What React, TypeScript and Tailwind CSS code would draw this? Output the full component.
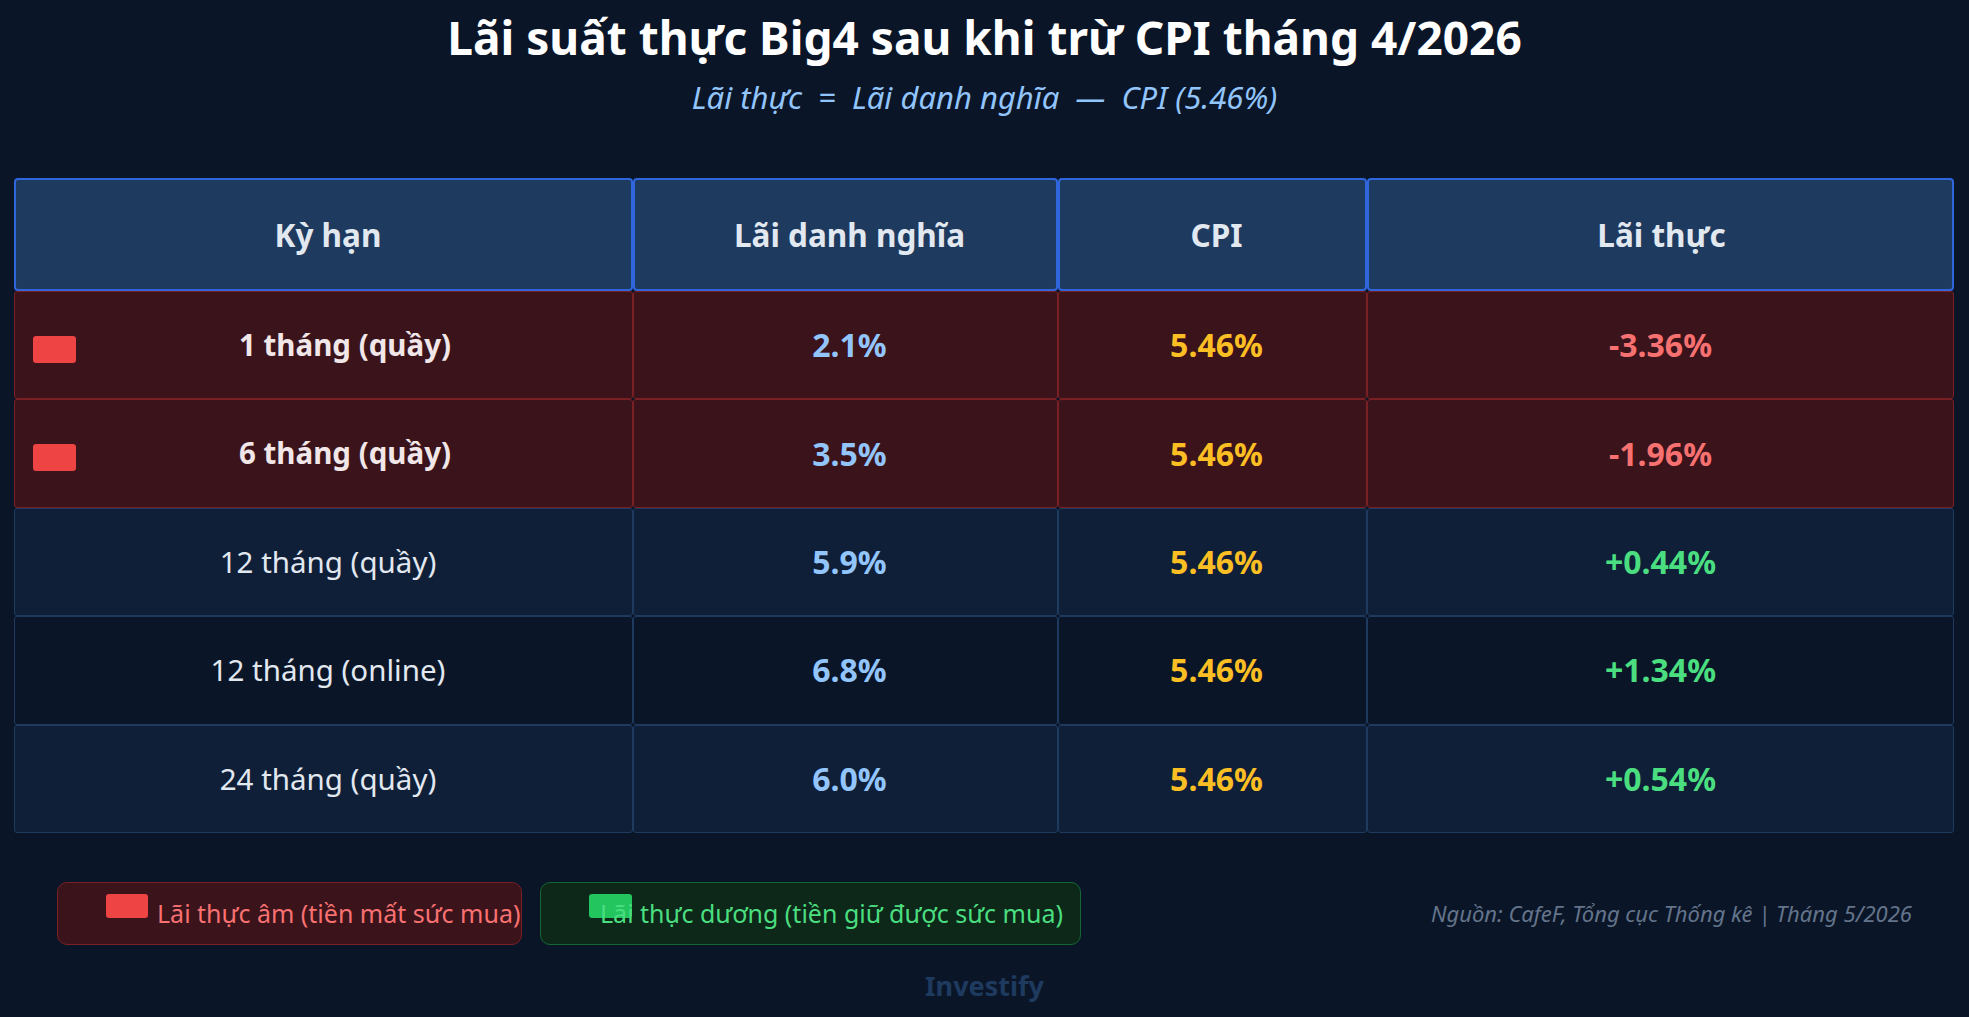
import React from 'react';

type Row = {
  term: string;
  nominal: string;
  cpi: string;
  real: string;
  negative: boolean;
  tone: 'red' | 'light' | 'dark';
};

const ROWS: Row[] = [
  { term: '1 tháng (quầy)', nominal: '2.1%', cpi: '5.46%', real: '-3.36%', negative: true, tone: 'red' },
  { term: '6 tháng (quầy)', nominal: '3.5%', cpi: '5.46%', real: '-1.96%', negative: true, tone: 'red' },
  { term: '12 tháng (quầy)', nominal: '5.9%', cpi: '5.46%', real: '+0.44%', negative: false, tone: 'light' },
  { term: '12 tháng (online)', nominal: '6.8%', cpi: '5.46%', real: '+1.34%', negative: false, tone: 'dark' },
  { term: '24 tháng (quầy)', nominal: '6.0%', cpi: '5.46%', real: '+0.54%', negative: false, tone: 'light' },
];

const HEADERS = [
  { label: 'Kỳ hạn', pad: 'pl-[9px]' },
  { label: 'Lãi danh nghĩa', pad: 'pl-[8px]' },
  { label: 'CPI', pad: 'pl-[8px]' },
  { label: 'Lãi thực', pad: 'pl-[2px]' },
];

const toneClass: Record<Row['tone'], string> = {
  red: 'bg-[#3b131b] border-[#7a1f24]',
  light: 'bg-[#0f1f38] border-[#1e3a5f]',
  dark: 'bg-[#0a1628] border-[#1e3a5f]',
};

// ---------------------------------------------------------------------------
// Table
// ---------------------------------------------------------------------------

function HeaderRow() {
  return (
    <div className="grid grid-cols-[619px_425px_309px_587px] h-[113px]">
      {HEADERS.map((h) => (
        <div
          key={h.label}
          className={`flex items-center justify-center bg-[#1e3a5f] border-2 border-[#2f66dc] rounded-[4px] text-[31.5px] font-bold text-[#e2e8f0] ${h.pad}`}
        >
          {h.label}
        </div>
      ))}
    </div>
  );
}

function DataRow({ row }: { row: Row }) {
  const cell = `flex items-center justify-center border rounded-[3px] ${toneClass[row.tone]}`;
  return (
    <div className="grid grid-cols-[619px_425px_309px_587px] h-[108.4px]">
      <div className={`${cell} relative`}>
        {row.negative && (
          <span className="absolute left-[18px] top-[44px] w-[43px] h-[27px] rounded-[3px] bg-[#ef4444]" />
        )}
        <span
          className={
            row.negative
              ? 'pl-[43px] text-[29.5px] font-bold text-[#f1e6e8]'
              : 'pl-[9px] text-[29.5px] text-[#e2e8f0]'
          }
        >
          {row.term}
        </span>
      </div>
      <div className={`${cell} pl-[8px]`}>
        <span className="text-[32px] font-bold text-[#93c5fd]">{row.nominal}</span>
      </div>
      <div className={`${cell} pl-[8px]`}>
        <span className="text-[32px] font-bold text-[#fbbf24]">{row.cpi}</span>
      </div>
      <div className={cell}>
        <span
          className={`text-[32px] font-bold ${row.negative ? 'text-[#f87171]' : 'text-[#4ade80]'}`}
        >
          {row.real}
        </span>
      </div>
    </div>
  );
}

// ---------------------------------------------------------------------------
// Page
// ---------------------------------------------------------------------------

export default function App() {
  return (
    <div
      className="w-[1969px] h-[1017px] bg-[#0a1628] flex flex-col overflow-hidden"
      style={{ fontFamily: '"Noto Sans", "Open Sans", sans-serif' }}
    >
      {/* Title block */}
      <h1 className="pt-[14px] text-center text-[46px] leading-none font-bold text-white">
        Lãi suất thực Big4 sau khi trừ CPI tháng 4/2026
      </h1>
      <p className="mt-[22px] text-center text-[31px] leading-none italic text-[#93c5fd] whitespace-pre">
        {'Lãi thực  =  Lãi danh nghĩa  —  CPI (5.46%)'}
      </p>

      {/* Table */}
      <div className="mt-[65px] px-[14px] flex flex-col">
        <HeaderRow />
        {ROWS.map((r) => (
          <DataRow key={r.term} row={r} />
        ))}
      </div>

      {/* Legend + source */}
      <div className="mt-[49px] px-[57px] flex items-center">
        <div className="w-[465px] h-[63px] flex items-center pl-[48px] rounded-[10px] border border-[#7a1f24] bg-[#3b131b]">
          <span className="w-[42px] h-[24px] mb-[14px] rounded-[3px] bg-[#ef4444] shrink-0" />
          <span className="ml-[9px] text-[25px] text-[#f87171] whitespace-nowrap">
            Lãi thực âm (tiền mất sức mua)
          </span>
        </div>
        <div className="ml-[18px] w-[541px] h-[63px] flex items-center pl-[48px] rounded-[10px] border border-[#166534] bg-[#0d2818]">
          <span className="w-[43px] h-[24px] mb-[14px] rounded-[3px] bg-[#22c55e] shrink-0" />
          <span className="-ml-[32px] text-[25px] text-[#4ade80] whitespace-nowrap">
            Lãi thực dương (tiền giữ được sức mua)
          </span>
        </div>
        <span className="ml-auto text-[22px] italic text-[#64748b] whitespace-nowrap">
          Nguồn: CafeF, Tổng cục Thống kê | Tháng 5/2026
        </span>
      </div>

      {/* Watermark */}
      <div className="mt-[27px] text-center text-[27px] leading-none font-bold text-[#1e3a5f]">
        Investify
      </div>
    </div>
  );
}
